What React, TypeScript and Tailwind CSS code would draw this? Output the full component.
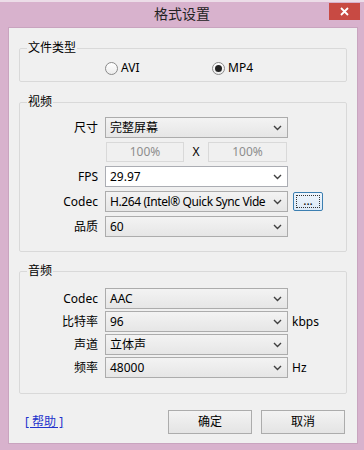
import React from 'react';

const font = { fontFamily: '"Noto Sans", "Noto Sans CJK SC", sans-serif' };

const Chevron: React.FC = () => (
  <svg className="w-[9px] h-[6px] mr-[5px] shrink-0" viewBox="0 0 9 6" fill="none" stroke="#404040" strokeWidth={1.4}>
    <path d="M1 1l3.5 3.5L8 1" />
  </svg>
);

const Combo: React.FC<{ value: string; editable?: boolean; tight?: boolean }> = ({ value, editable, tight }) => (
  <div
    className={`flex items-center w-[183px] h-[21px] border ${
      editable ? 'bg-white border-[#abadb3]' : 'bg-gradient-to-b from-[#f3f3f3] to-[#e6e6e6] border-[#acacac]'
    }`}
  >
    <span className={`flex-1 pl-[4px] whitespace-nowrap leading-[19px] ${tight ? 'tracking-[-0.4px]' : ''}`}>{value}</span>
    <Chevron />
  </div>
);

const Row: React.FC<{ label: string; children: React.ReactNode }> = ({ label, children }) => (
  <div className="flex items-center h-[21px]">
    <span className="w-[79px] text-right pr-[1px]">{label}</span>
    <div className="ml-[6px] flex items-center">{children}</div>
  </div>
);

const Radio: React.FC<{ checked?: boolean; label: string }> = ({ checked, label }) => (
  <label className="flex items-center h-[14px]">
    <span className="w-[13px] h-[13px] rounded-full border border-[#8a8a8a] bg-gradient-to-b from-[#ffffff] to-[#ececec] flex items-center justify-center">
      {checked && <span className="w-[7px] h-[7px] rounded-full bg-[#222]" />}
    </span>
    <span className="ml-[3px]">{label}</span>
  </label>
);

const App: React.FC = () => {
  return (
    <div
      className="w-[364px] h-[450px] bg-[#d8b2cd] border-t-[2px] border-[#ecdde8] flex flex-col text-[12px] text-black"
      style={font}
    >
      {/* Title bar */}
      <div className="relative h-[25px] flex items-center justify-center">
        <span className="text-[14px] text-[#222] -mt-[2px]">格式设置</span>
        <div className="absolute right-[4px] top-[1px] w-[31px] h-[17px] bg-[#c84a43] flex items-center justify-center">
          <svg className="w-[9px] h-[9px]" viewBox="0 0 9 9" stroke="white" strokeWidth={1.8}>
            <path d="M1 1l7 7M8 1L1 8" />
          </svg>
        </div>
      </div>

      {/* Client area */}
      <div className="ml-[8px] mr-[6px] h-[417px] bg-[#f0f0f0] border border-[#c9a4bf] px-[10px] pt-[12px] flex flex-col">
        {/* 文件类型 */}
        <fieldset className="border border-[#d9d9d9] rounded-[2px] pb-[6px]">
          <legend className="ml-[7px] px-[1px] leading-[16px]">文件类型</legend>
          <div className="flex items-center mt-[5px] pl-[85px]">
            <div className="w-[107px]">
              <Radio label="AVI" />
            </div>
            <Radio checked label="MP4" />
          </div>
        </fieldset>

        {/* 视频 */}
        <fieldset className="mt-[12px] border border-[#d9d9d9] rounded-[2px] pb-[14px]">
          <legend className="ml-[7px] px-[1px] leading-[16px]">视频</legend>
          <div className="mt-[7px] flex flex-col gap-[4px]">
            <Row label="尺寸">
              <Combo value="完整屏幕" />
            </Row>
            <div className="flex items-center h-[20px] pl-[86px]">
              <div className="w-[78px] h-[20px] border border-[#d9d9d9] text-center text-[#8d8d8d] leading-[18px]">100%</div>
              <span className="w-[24px] text-center">X</span>
              <div className="w-[79px] h-[20px] border border-[#d9d9d9] text-center text-[#8d8d8d] leading-[18px]">100%</div>
            </div>
            <Row label="FPS">
              <Combo value="29.97" editable />
            </Row>
            <Row label="Codec">
              <Combo value="H.264 (Intel® Quick Sync Vide" tight />
              <button className="ml-[5px] w-[30px] h-[19px] rounded-[2px] border border-[#3c7fb1] bg-gradient-to-b from-[#eef5fc] to-[#dceaf8] p-[2px]">
                <div className="w-full h-full border border-dotted border-[#333] flex items-end justify-center leading-[12px]">...</div>
              </button>
            </Row>
            <Row label="品质">
              <Combo value="60" />
            </Row>
          </div>
        </fieldset>

        {/* 音频 */}
        <fieldset className="mt-[11px] border border-[#d9d9d9] rounded-[2px] pb-[15px]">
          <legend className="ml-[7px] px-[1px] leading-[16px]">音频</legend>
          <div className="mt-[9px] flex flex-col gap-[2px]">
            <Row label="Codec">
              <Combo value="AAC" />
            </Row>
            <Row label="比特率">
              <Combo value="96" />
              <span className="ml-[4px]">kbps</span>
            </Row>
            <Row label="声道">
              <Combo value="立体声" />
            </Row>
            <Row label="频率">
              <Combo value="48000" />
              <span className="ml-[4px]">Hz</span>
            </Row>
          </div>
        </fieldset>

        {/* Buttons */}
        <div className="mt-[16px] flex items-center">
          <a className="ml-[6px] text-[#2233cc] underline">[ 帮助 ]</a>
          <div className="ml-auto mr-[2px] flex gap-[9px]">
            <button className="w-[84px] h-[24px] border border-[#acacac] bg-gradient-to-b from-[#f3f3f3] to-[#e4e4e4]">确定</button>
            <button className="w-[84px] h-[24px] border border-[#acacac] bg-gradient-to-b from-[#f3f3f3] to-[#e4e4e4]">取消</button>
          </div>
        </div>
      </div>
    </div>
  );
};

export default App;
